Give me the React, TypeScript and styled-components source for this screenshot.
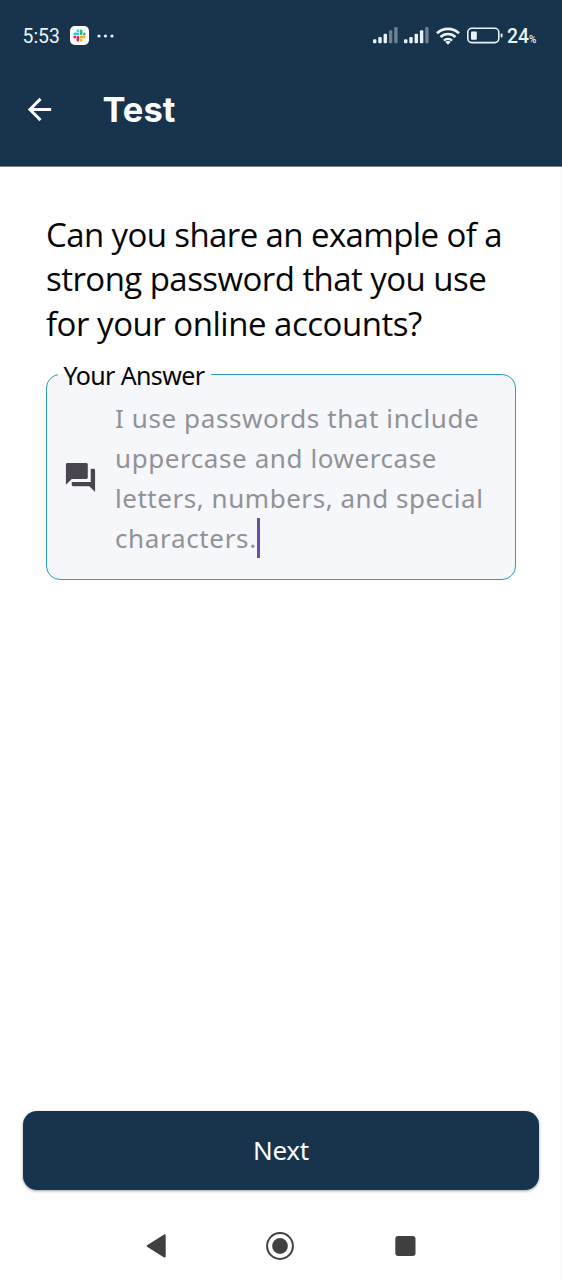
import React from "react";
import styled, { createGlobalStyle } from "styled-components";
import { MdArrowBack, MdForum } from "react-icons/md";

const navy = "#18344c";

const GlobalStyle = createGlobalStyle`
  * { box-sizing: border-box; }
  body { margin: 0; background: #fefefe; }
`;

const Screen = styled.div`
  display: flex;
  flex-direction: column;
  width: 562px;
  height: 1280px;
  background: linear-gradient(to left, #f4f4f6 1px, #fefefe 1px);
  font-family: "Noto Sans", sans-serif;
  color: #060606;
  overflow: hidden;
`;

const Header = styled.header`
  height: 167px;
  flex: none;
  background: ${navy};
  border-bottom: 1px solid #6f808c;
`;

const StatusBar = styled.div`
  display: flex;
  align-items: center;
  height: 71px;
  padding: 0 24px 0 22.5px;
  color: #e9f3fa;
  font-family: Roboto, sans-serif;
  svg { display: block; flex: none; }
`;

const Clock = styled.span`
  width: 47.5px;
  padding-top: 2px;
  font-size: 19.4px;
  font-weight: 450;
  line-height: 24px;
`;

const MoreDots = styled.svg`
  margin-left: 8px;
`;

const StatusIcons = styled.div`
  display: flex;
  align-items: center;
  margin-left: auto;
`;

const WifiIcon = styled.svg`
  margin-right: 7.5px;
`;

const Percent = styled.span`
  display: flex;
  align-items: baseline;
  width: 31px;
  margin-left: 4px;
  padding-top: 5px;
  font-size: 19.4px;
  font-weight: 500;
  line-height: 24px;
  white-space: nowrap;
  small { font-size: 10px; }
`;

const TitleBar = styled.div`
  display: flex;
  align-items: center;
  height: 77px;
  padding-left: 22px;
  color: #fbfdff;
  svg { display: block; }
`;

const Title = styled.h1`
  margin: 0 0 0 45.5px;
  font: 650 34.5px/43px Inter, sans-serif;
`;

const Content = styled.main`
  flex: 1;
  padding: 46px 46px 0;
`;

const Question = styled.h2`
  margin: 0;
  font: 400 33px/44.3px "Open Sans", sans-serif;
`;

const TextLine = styled.span<{ $spacing: number }>`
  display: block;
  white-space: nowrap;
  letter-spacing: ${(p) => p.$spacing}px;
`;

const Field = styled.fieldset`
  display: flex;
  align-items: center;
  width: 470px;
  height: 219px;
  margin: 15px 0 0;
  padding: 0 0 12px 15.7px;
  border: 1.5px solid #309dbb;
  border-radius: 14px;
  background: #f6f7fa;
  svg { flex: none; margin-bottom: 1px; color: #49454f; }
`;

const Label = styled.legend`
  margin-left: -5.2px;
  padding: 0 6.5px 0 6px;
  font-size: 25px;
  line-height: 28px;
  letter-spacing: -0.63px;
`;

const Answer = styled.div`
  margin-left: 17.3px;
  color: #919296;
  font-size: 26px;
  line-height: 40px;
`;

const Caret = styled.i`
  display: inline-block;
  width: 3px;
  height: 40px;
  vertical-align: top;
  background: #6750a4;
`;

const NextButton = styled.button`
  flex: none;
  height: 79px;
  margin: 0 23px;
  padding: 0 0 2px;
  border: 0;
  border-radius: 14px;
  background: ${navy};
  color: #fbfdff;
  font: 400 26px/36px "Noto Sans", sans-serif;
  letter-spacing: -0.3px;
  box-shadow: 0 1px 3px rgba(24, 52, 76, 0.45);
`;

const NavBar = styled.nav`
  flex: none;
  height: 90px;
  padding: 42px 146.5px 0 146px;
  display: flex;
  justify-content: space-between;
  svg { display: block; }
`;

const barTops = [12.3, 10, 6.7, 3.3, 0];

function Signal({ level }: { level: number }) {
  return (
    <svg width="31.3" height="17" viewBox="0 0 31.3 17">
      {barTops.map((top, i) => (
        <rect key={i} x={i * 5.3} y={top} width="3.4" height={16.3 - top} rx="1" fill={i < level ? "#e9f3fa" : "#6c8191"} />
      ))}
    </svg>
  );
}

function Wifi() {
  return (
    <WifiIcon width="24" height="18" viewBox="0 0 24 18" fill="none" stroke="#e9f3fa" strokeWidth="2.6">
      <path d="M1 6.3a15.8 15.8 0 0 1 22 0M4.5 10a10.8 10.8 0 0 1 15 0M8 13.6a5.8 5.8 0 0 1 8 0" />
      <path d="M12 17.8 9.3 15.1a3.9 3.9 0 0 1 5.4 0Z" fill="#e9f3fa" stroke="none" />
    </WifiIcon>
  );
}

function Battery() {
  return (
    <svg width="36" height="17" viewBox="0 0 36 17">
      <rect x="0.8" y="1.3" width="31" height="14.3" rx="4" fill="none" stroke="#e9f3fa" strokeWidth="1.6" />
      <rect x="4" y="4.5" width="5.8" height="8.2" rx="1" fill="#e9f3fa" />
      <rect x="33.7" y="6.4" width="1.8" height="4.2" rx="0.8" fill="#e9f3fa" />
    </svg>
  );
}

function SlackBadge() {
  return (
    <svg width="19" height="19" viewBox="0 0 19 19">
      <rect width="19" height="19" rx="4.8" fill="#fdfdfd" />
      <g transform="translate(3.4 3.4) scale(.51)">
        <path fill="#e01e5a" d="M5.04 15.17a2.53 2.53 0 1 1-2.52-2.53h2.52zm1.27 0a2.52 2.52 0 0 1 5.04 0v6.31a2.52 2.52 0 0 1-5.04 0z" />
        <path fill="#36c5f0" d="M8.83 5.04a2.52 2.52 0 1 1 2.52-2.52v2.52zm0 1.27a2.52 2.52 0 0 1 0 5.04H2.52a2.52 2.52 0 0 1 0-5.04z" />
        <path fill="#2eb67d" d="M18.96 8.83a2.52 2.52 0 1 1 2.52 2.52h-2.52zm-1.27 0a2.52 2.52 0 0 1-5.04 0V2.52a2.52 2.52 0 0 1 5.04 0z" />
        <path fill="#ecb22e" d="M15.17 18.96a2.52 2.52 0 1 1-2.52 2.52v-2.52zm0-1.27a2.52 2.52 0 0 1 0-5.04h6.31a2.52 2.52 0 0 1 0 5.04z" />
      </g>
    </svg>
  );
}

export default function App() {
  return (
    <Screen>
      <GlobalStyle />
      <Header>
        <StatusBar>
          <Clock>5:53</Clock>
          <SlackBadge />
          <MoreDots width="20" height="4" viewBox="0 0 20 4" fill="#e9f3fa">
            <circle cx="2" cy="2" r="1.6" />
            <circle cx="8.5" cy="2" r="1.6" />
            <circle cx="15" cy="2" r="1.6" />
          </MoreDots>
          <StatusIcons>
            <Signal level={3} />
            <Signal level={4} />
            <Wifi />
            <Battery />
            <Percent>24<small>%</small></Percent>
          </StatusIcons>
        </StatusBar>
        <TitleBar>
          <MdArrowBack size={35} />
          <Title>Test</Title>
        </TitleBar>
      </Header>
      <Content>
        <Question>
          <TextLine $spacing={-0.6}>Can you share an example of a</TextLine>
          <TextLine $spacing={-0.55}>strong password that you use</TextLine>
          <TextLine $spacing={-0.48}>for your online accounts?</TextLine>
        </Question>
        <Field>
          <Label>Your Answer</Label>
          <MdForum size={35} />
          <Answer>
            <TextLine $spacing={0.6}>I use passwords that include</TextLine>
            <TextLine $spacing={0.58}>uppercase and lowercase</TextLine>
            <TextLine $spacing={0.54}>letters, numbers, and special</TextLine>
            <TextLine $spacing={0.65}>characters.<Caret /></TextLine>
          </Answer>
        </Field>
      </Content>
      <NextButton>Next</NextButton>
      <NavBar>
        <svg width="20" height="28" viewBox="0 0 20 28">
          <path d="M1.6 14 18.7 3.4v21.2Z" fill="#404040" stroke="#404040" strokeWidth="2" strokeLinejoin="round" />
        </svg>
        <svg width="28" height="28" viewBox="0 0 28 28">
          <circle cx="14" cy="14" r="12.9" fill="none" stroke="#404040" strokeWidth="2" />
          <circle cx="14" cy="14" r="7.9" fill="#404040" />
        </svg>
        <svg width="21" height="28" viewBox="0 0 21 28">
          <rect x="0.3" y="4" width="20.2" height="20" rx="3" fill="#404040" />
        </svg>
      </NavBar>
    </Screen>
  );
}
